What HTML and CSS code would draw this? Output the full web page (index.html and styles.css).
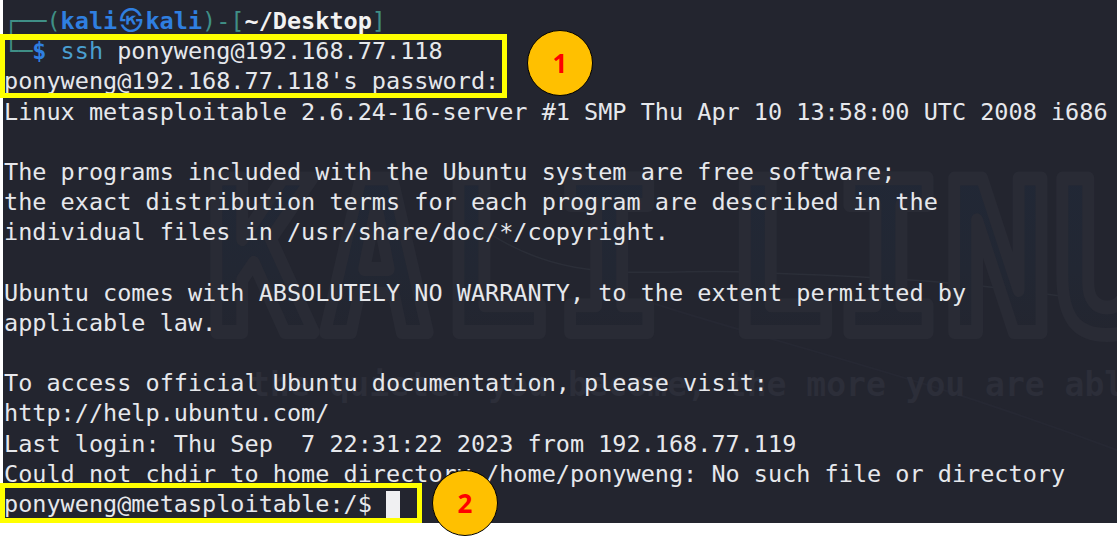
FILE: index.html
```html
<!DOCTYPE html>
<html lang="en">
<head>
<meta charset="utf-8">
<title>Kali terminal SSH session</title>
<link rel="stylesheet" href="styles.css">
</head>
<body>
<main class="shot">
  <div class="terminal">
    <div class="watermark" aria-hidden="true">
      <svg class="swoosh" width="1114" height="523" viewBox="0 0 1114 523" fill="none">
        <defs>
          <linearGradient id="wmFill" x1="0" y1="0" x2="0" y2="1">
            <stop offset="0" stop-color="#212837"/>
            <stop offset="0.55" stop-color="#222733"/>
            <stop offset="0.85" stop-color="#23252f"/>
          </linearGradient>
        </defs>
        <path d="M470 222 C560 290 640 268 740 272 S960 278 1114 305" stroke="#2b2e38" stroke-width="1.5"/>
        <path d="M640 300 C760 340 900 370 1114 450" stroke="#262833" stroke-width="2"/>
        <text class="wm-title" transform="translate(0 332) scale(1 1.17)" fill="url(#wmFill)" stroke="#292b35" stroke-width="12" stroke-linejoin="round"><tspan class="wm-kali" x="203" y="0">KALI</tspan><tspan class="wm-linux" x="722" y="0">LINUX</tspan></text>
      </svg>
      <div class="wm-tag">the quieter you become, the more you are able to hear</div>
    </div>
    <div class="output">
      <div class="line"><span class="frame">┌──(</span><b class="blue">kali<span class="skull">㉿</span>kali</b><span class="frame">)-[</span><b class="white">~/Desktop</b><span class="frame">]</span></div>
      <div class="line"><span class="frame">└─</span><b class="blue">$</b> <span class="cmd">ssh</span> ponyweng@192.168.77.118</div>
      <div class="line">ponyweng@192.168.77.118's password:</div>
      <div class="line">Linux metasploitable 2.6.24-16-server #1 SMP Thu Apr 10 13:58:00 UTC 2008 i686</div>
      <div class="line"> </div>
      <div class="line">The programs included with the Ubuntu system are free software;</div>
      <div class="line">the exact distribution terms for each program are described in the</div>
      <div class="line">individual files in /usr/share/doc/*/copyright.</div>
      <div class="line"> </div>
      <div class="line">Ubuntu comes with ABSOLUTELY NO WARRANTY, to the extent permitted by</div>
      <div class="line">applicable law.</div>
      <div class="line"> </div>
      <div class="line">To access official Ubuntu documentation, please visit:</div>
      <div class="line">http://help.ubuntu.com/</div>
      <div class="line">Last login: Thu Sep  7 22:31:22 2023 from 192.168.77.119</div>
      <div class="line">Could not chdir to home directory /home/ponyweng: No such file or directory</div>
      <div class="line">ponyweng@metasploitable:/$ <span class="cursor"></span></div>
    </div>
  </div>
  <div class="hl hl-one"></div>
  <div class="hl hl-two"></div>
  <div class="badge badge-one">1</div>
  <div class="badge badge-two">2</div>
</main>
</body>
</html>
```
FILE: styles.css
```css
html, body { margin: 0; padding: 0; background: #fff; }
body { width: 1117px; height: 540px; overflow: hidden; }
.shot { position: relative; width: 1117px; height: 540px; }
.terminal {
  position: relative;
  margin-left: 3px;
  height: 523px;
  overflow: hidden;
  background: #23252f;
}
.watermark { position: absolute; inset: 0; }
.swoosh { position: absolute; left: 0; top: 0; }
.wm-title { font: 700 180px "DejaVu Sans Mono", monospace; }
.wm-kali { letter-spacing: 8px; }
.wm-linux { letter-spacing: 1px; }
.wm-tag {
  position: absolute;
  left: 247px;
  top: 368px;
  font: 700 33px/1 "DejaVu Sans Mono", monospace;
  white-space: nowrap;
  color: #2c2e39;
}
.output {
  position: relative;
  padding: 6px 0 0 1px;
  font: 23.5px/30.2px "DejaVu Sans Mono", "Noto Sans CJK SC", monospace;
  color: #e6e8ec;
}
.line { height: 30.2px; white-space: pre; }
.frame { color: #3f8f86; }
.blue { color: #2f7fe0; }
.white { color: #f2f2f2; }
.cmd { color: #4a9fd0; }
.skull { display: inline-block; width: 2ch; text-align: center; font-weight: 400; }
.cursor { display: inline-block; width: 14px; height: 28px; background: #f0f0f2; vertical-align: -7px; }
.hl { position: absolute; left: 0; box-sizing: border-box; border: 5px solid #ffff00; }
.hl-one { top: 34px; width: 507px; height: 64px; border-top-width: 6px; }
.hl-two { top: 483px; width: 422px; height: 40px; }
.badge {
  position: absolute;
  box-sizing: border-box;
  width: 66px;
  height: 66px;
  border: 1px solid #000;
  border-radius: 50%;
  background: #ffc000;
  color: #ff0000;
  font: 700 26px/64px "Open Sans", sans-serif;
  text-align: center;
}
.badge-one { left: 527px; top: 30px; }
.badge-two { left: 432px; top: 470px; }
```
